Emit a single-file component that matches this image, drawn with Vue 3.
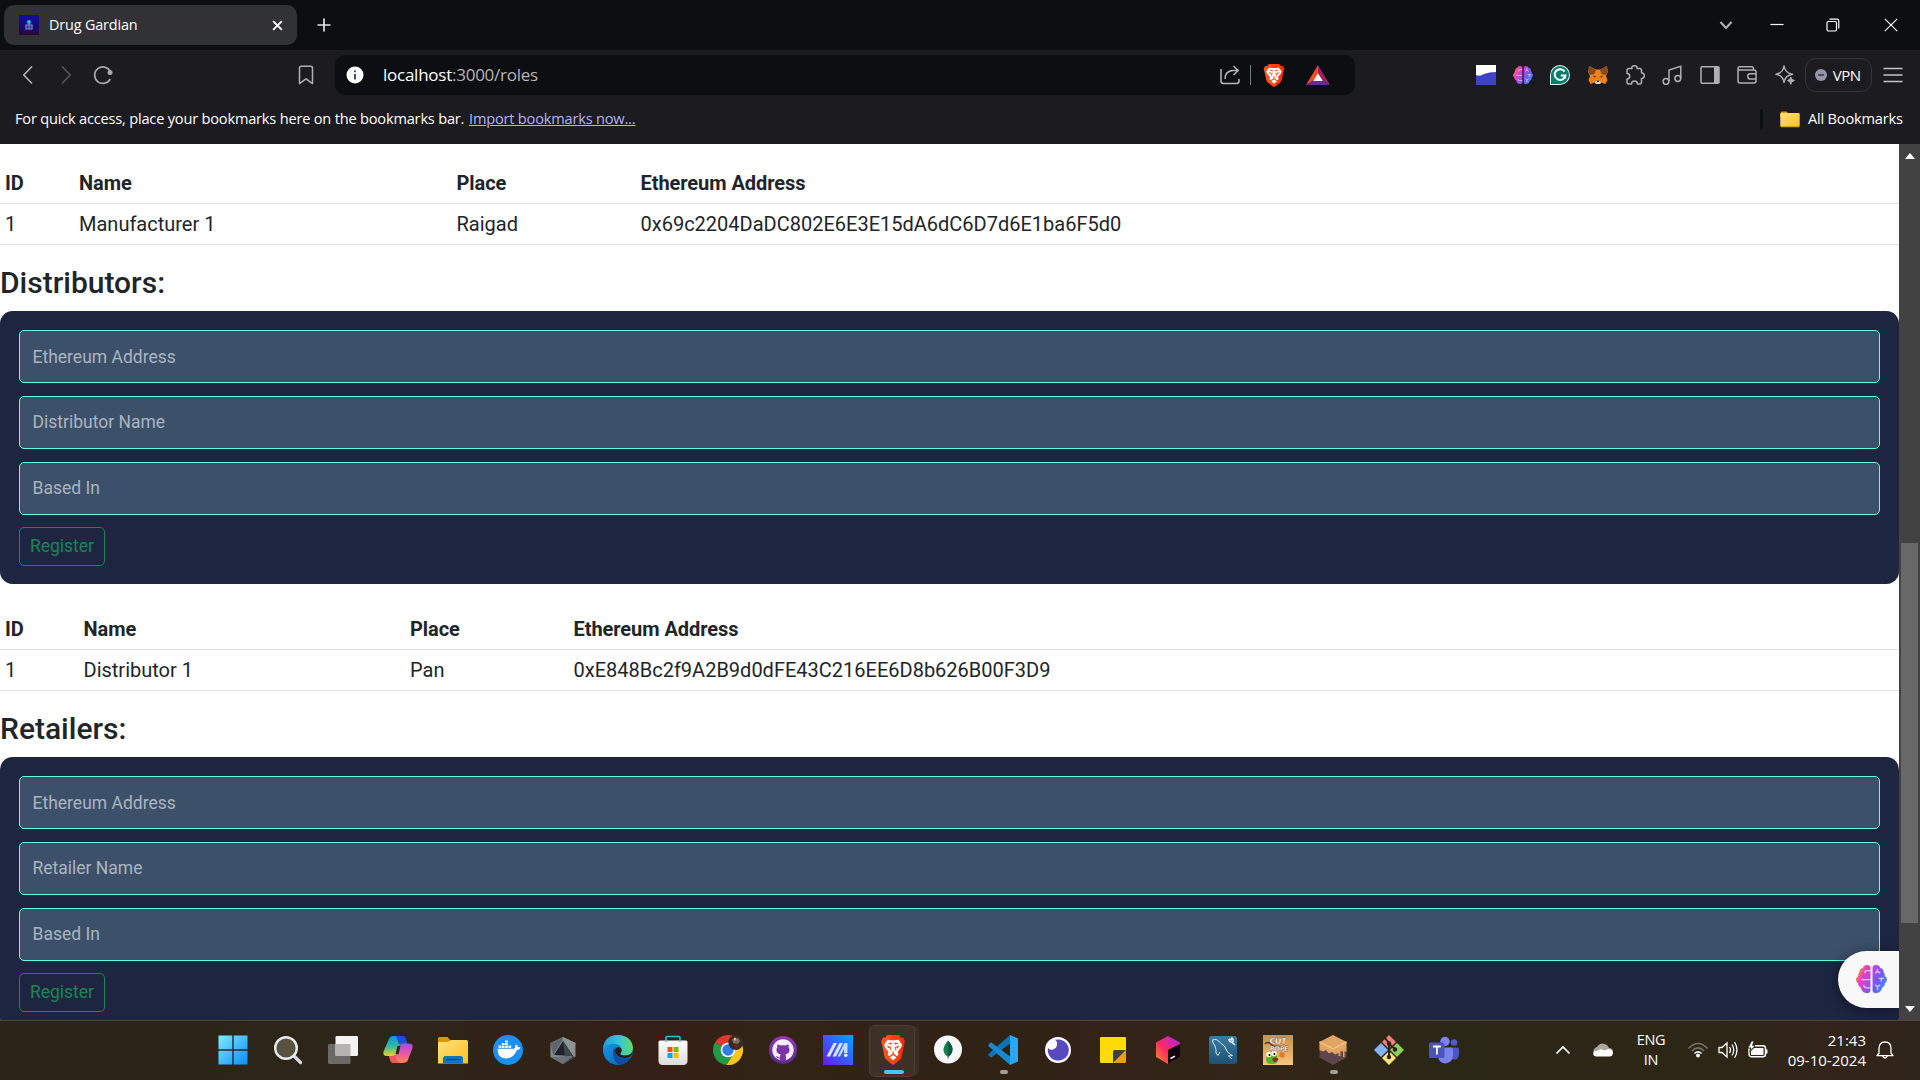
<script setup>
const sections = [
  {
    kind: 'one',
    row: ['1', 'Manufacturer 1', 'Raigad', '0x69c2204DaDC802E6E3E15dA6dC6D7d6E1ba6F5d0'],
    title: 'Distributors:',
    fields: ['Ethereum Address', 'Distributor Name', 'Based In'],
  },
  {
    kind: 'two',
    row: ['1', 'Distributor 1', 'Pan', '0xE848Bc2f9A2B9d0dFE43C216EE6D8b626B00F3D9'],
    title: 'Retailers:',
    fields: ['Ethereum Address', 'Retailer Name', 'Based In'],
  },
]
const heads = ['ID', 'Name', 'Place', 'Ethereum Address']
</script>

<template>
  <div class="screen">
    <svg class="defs" width="0" height="0">
      <defs>
        <linearGradient id="brainL" x1="0" y1="0" x2="1" y2="1">
          <stop offset="0" stop-color="#ffa81f" /><stop offset=".18" stop-color="#fb8a3c" /><stop offset=".42" stop-color="#ee3cc4" /><stop offset="1" stop-color="#6a5cf5" />
        </linearGradient>
        <linearGradient id="brainR" x1="0" y1="0" x2="1" y2="1">
          <stop offset="0" stop-color="#d33be0" /><stop offset=".5" stop-color="#6a5cf5" /><stop offset="1" stop-color="#2aa9ff" />
        </linearGradient>
        <linearGradient id="win" x1="0" y1="0" x2="1" y2="1"><stop offset="0" stop-color="#7cecff" /><stop offset="1" stop-color="#0d8cf5" /></linearGradient>
        <linearGradient id="brv" x1="0" y1="0" x2="1" y2="0"><stop offset="0" stop-color="#ff5a1f" /><stop offset="1" stop-color="#fb2a05" /></linearGradient>
        <linearGradient id="fold" x1="0" y1="0" x2="1" y2="1"><stop offset="0" stop-color="#ffe27a" /><stop offset="1" stop-color="#fbbf23" /></linearGradient>
        <linearGradient id="copA" x1="0" y1="0" x2="0" y2="1"><stop offset="0" stop-color="#1a8fe8" /><stop offset=".5" stop-color="#2db9a0" /><stop offset="1" stop-color="#f0d02c" /></linearGradient>
        <linearGradient id="copB" x1="0" y1="0" x2="0" y2="1"><stop offset="0" stop-color="#a44ae8" /><stop offset=".5" stop-color="#e457a8" /><stop offset="1" stop-color="#ff8a4a" /></linearGradient>
        <linearGradient id="edgeT" x1="0" y1="0" x2="1" y2="0"><stop offset="0" stop-color="#1c9fe0" /><stop offset=".55" stop-color="#35c6d8" /><stop offset="1" stop-color="#62dd5c" /></linearGradient>
        <linearGradient id="edgeB" x1="0" y1="0" x2="1" y2="1"><stop offset="0" stop-color="#1aa0e8" /><stop offset="1" stop-color="#0b58b0" /></linearGradient>
        <linearGradient id="gh" x1="0" y1="0" x2="0" y2="1"><stop offset="0" stop-color="#9239b8" /><stop offset="1" stop-color="#572a86" /></linearGradient>
        <linearGradient id="mm" x1="0" y1="1" x2="1" y2="0"><stop offset="0" stop-color="#6a17f5" /><stop offset="1" stop-color="#00a5ff" /></linearGradient>
        <linearGradient id="jb" x1="0" y1="1" x2="1" y2="0"><stop offset="0" stop-color="#ff8a2a" /><stop offset=".45" stop-color="#fb2a63" /><stop offset="1" stop-color="#a825f0" /></linearGradient>
        <linearGradient id="sql" x1="0" y1="0" x2="0" y2="1"><stop offset="0" stop-color="#3a7ca4" /><stop offset="1" stop-color="#1d5272" /></linearGradient>
        <linearGradient id="bag" x1="0" y1="0" x2="0" y2="1"><stop offset="0" stop-color="#ffffff" /><stop offset="1" stop-color="#dcdcdc" /></linearGradient>
        <linearGradient id="cut" x1="0" y1="0" x2="0" y2="1"><stop offset="0" stop-color="#cf8d45" /><stop offset="1" stop-color="#f3c77c" /></linearGradient>
        <linearGradient id="fav" x1="0" y1="0" x2="0" y2="1"><stop offset="0" stop-color="#1209a8" /><stop offset=".6" stop-color="#1b0a72" /><stop offset="1" stop-color="#27062f" /></linearGradient>
        <g id="brain">
          <path fill="url(#brainL)" d="M14 3.2Q13.4 1 10.500 1Q7.200 1.200 6.600 3.800Q3 4.600 3.300 8Q1.800 9.400 2.200 11.500Q0 12.800 0 15Q0 17.300 2.100 18.500Q1.700 21.600 4.600 22.700Q5.300 26.600 8.600 27.800Q12.800 29.200 14 26Z" />
          <path fill="url(#brainR)" d="M16 3.200Q16.600 1 19.500 1Q22.800 1.200 23.400 3.800Q27 4.600 26.700 8Q28.200 9.400 27.800 11.500Q30 12.800 30 15Q30 17.300 27.900 18.500Q28.300 21.600 25.400 22.700Q24.700 26.600 21.400 27.800Q17.200 29.200 16 26Z" />
          <path class="brain-lines" d="M14 15H5M14 6.500H11Q8.500 6.600 8.500 9M14 23H10.500Q7.800 22.800 7.300 20.500M18.500 9L20.800 7V4.500M20.800 7L23.500 9M22 14H27M24.500 14V17M18.500 20L20.800 22V25M20.800 22L23.500 20" />
        </g>
        <g id="lion">
          <path fill="url(#brv)" d="M8 0H22L24.500 2.800L27 2.400L29 6.500L28 10L25.500 21Q25 23 23 24.600L17 29Q15 30.600 13 29L7 24.600Q5 23 4.500 21L2 10L1 6.500L3 2.400L5.500 2.800Z" />
          <path fill="#fff" d="M8.500 4.500L12 5.300H18L21.500 4.500L25.600 9.700L24.500 12.500L20.500 17L21.500 19.500L19.500 21.200L15.800 18.800V16.500L19 14.800L18.500 12.600L16.800 11.500L18 9.200L21.800 8.200L17.500 7.500L15 8.500L12.500 7.500L8.200 8.200L12 9.200L13.200 11.500L11.500 12.600L11 14.800L14.200 16.500V18.800L10.500 21.200L8.500 19.500L9.500 17L5.500 12.500L4.400 9.700ZM15 20L19 22.400L15 25.600L11 22.400Z" />
          <path fill="#fff" d="M12.500 8.500H17.500L17 12L18 15L15 17L12 15L13 12Z" />
          <path fill="#f9400f" d="M7.500 10.500L12.500 12L9.500 13.200ZM22.500 10.500L17.500 12L20.500 13.200Z" />
        </g>
      </defs>
    </svg>

    <header class="tabs">
      <div class="tab">
        <svg class="favicon" viewBox="0 0 20 20"><rect width="20" height="20" fill="url(#fav)" /><circle cx="10" cy="7" r="2.100" fill="#22bccb" /><path d="M7 10H13V14H7ZM10 9V14M8.500 12H9M11 12H11.800" fill="none" stroke="#8096d8" stroke-width="1.100" /></svg>
        <span class="tab-title">Drug Gardian</span>
        <svg class="close" viewBox="0 0 10 10"><path d="M1 1L9 9M9 1L1 9" stroke="#fff" stroke-width="1.700" /></svg>
      </div>
      <svg class="plus" viewBox="0 0 14 14"><path d="M7 .500V13.500M.500 7H13.500" stroke="#e6e6e8" stroke-width="1.700" /></svg>
      <div class="window-buttons">
        <svg viewBox="0 0 16 16"><path d="M2.500 5L8 11L13.500 5" fill="none" stroke="#b2b2b5" stroke-width="2" /></svg>
        <svg viewBox="0 0 16 16"><path d="M1.500 7.500H14.500" stroke="#fff" stroke-width="1.200" /></svg>
        <svg viewBox="0 0 16 16"><rect x="2" y="4.500" width="9.500" height="9.500" rx="1.500" fill="none" stroke="#fff" stroke-width="1.200" /><path d="M4.500 2.200H12Q13.800 2.200 13.800 4V11.500" fill="none" stroke="#fff" stroke-width="1.200" /></svg>
        <svg viewBox="0 0 16 16"><path d="M1.800 1.800L14.200 14.200M14.200 1.800L1.800 14.200" stroke="#fff" stroke-width="1.200" /></svg>
      </div>
    </header>

    <nav class="toolbar">
      <svg class="nav-back" viewBox="0 0 20 20"><path d="M13 1.500L4.800 10L13 18.500" fill="none" stroke="#b6b5b9" stroke-width="1.600" /></svg>
      <svg class="nav-next" viewBox="0 0 20 20"><path d="M7 1.500L15.200 10L7 18.500" fill="none" stroke="#57565a" stroke-width="1.600" /></svg>
      <svg class="nav-load" viewBox="0 0 20 20"><path d="M17.400 6.500A8.300 8.300 0 1 0 17.300 14" fill="none" stroke="#a9a8ac" stroke-width="1.700" /><circle cx="17" cy="7.500" r="2.500" fill="#a9a8ac" /></svg>
      <svg class="mark" viewBox="0 0 16 20"><path d="M1.500 3Q1.500 1.300 3.200 1.300H12.800Q14.500 1.300 14.500 3V18.600L8 13.800L1.500 18.600Z" fill="none" stroke="#b0afb3" stroke-width="1.500" stroke-linejoin="round" /></svg>
      <div class="address">
        <svg class="info" viewBox="0 0 18 18"><circle cx="9" cy="9" r="8.500" fill="#fff" /><path d="M9 8V13.500M9 4.500V6.300" stroke="#3b3b3e" stroke-width="1.800" /></svg>
        <span class="url"><b>localhost</b>:3000/roles</span>
        <svg class="share" viewBox="0 0 20 20"><path d="M1 4V16Q1 18.500 3.500 18.500H16.500Q19 18.500 19 16V14M5 14Q5 6 13 5.500H18M13.500 1L18.200 5.500L13.500 10" fill="none" stroke="#b9b9bc" stroke-width="1.500" /></svg>
        <i class="bar"></i>
        <svg class="shield" viewBox="0 0 30 30" preserveAspectRatio="none"><use href="#lion" /></svg>
        <svg class="bat" viewBox="0 0 24 20"><path d="M12 0L0 20L12 13Z" fill="#ff4a24" /><path d="M12 0L24 20L12 13Z" fill="#9e1f63" /><path d="M0 20H24L12 12Z" fill="#662d91" /><path d="M12 8.200L16.700 16H7.300Z" fill="#fff" /></svg>
      </div>
      <div class="extensions">
        <svg viewBox="0 0 20 20"><path d="M0 0H20V20H0Z" fill="#fff" /><path d="M0 10Q4 12 8 9Q13 7 20 7V20H0Z" fill="#3d42c9" /></svg>
        <svg viewBox="0 0 30 29"><use href="#brain" /></svg>
        <svg viewBox="0 0 20 20"><path d="M0 20V10A10 10 0 1 1 10 20Z" fill="#e4f2ed" /><path d="M1 19V10A9 9 0 1 1 10 19Z" fill="#087d6b" /><path d="M14.600 6.600A5.400 5.400 0 1 0 15.400 10.500H10.800M15.300 10.300L14.800 13.500" fill="none" stroke="#fff" stroke-width="2" /></svg>
        <svg viewBox="0 0 20 20"><path d="M1 1L8 4.500H12L19 1L19.800 7L18 11L19.500 15L17.500 19L13 17.500L12 19H8L7 17.500L2.500 19L.500 15L2 11L.200 7Z" fill="#ee8020" /><path d="M1 1L8 5L6.500 9L2 10L.500 7ZM19 1L12 5L13.500 9L18 10L19.500 7Z" fill="#864b20" /><path d="M5 10.500L8.500 12L6 12.500ZM15 10.500L11.500 12L14 12.500Z" fill="#3b2b20" /><path d="M8 15.500H12L13 17.500L12 19H8L7 17.500Z" fill="#ded2c8" /><path d="M8.500 15.500H11.500L11 17H9Z" fill="#2d2925" /></svg>
        <svg viewBox="0 0 20 20"><path d="M2 5.500Q2 3.500 4 3.500H7Q6.200 .800 9.500 .800Q12.600 .800 12 3.500H14.500Q16.500 3.500 16.500 5.500V8Q19.400 8 19.400 10.800Q19.400 13.500 16.500 13.500V17Q16.500 19 14.500 19H12.500Q12.500 16 9.500 16Q6.500 16 6.500 19H4Q2 19 2 17V14Q4.700 14 4.700 11Q4.700 8.500 2 8.500Z" fill="none" stroke="#b0afb3" stroke-width="1.500" stroke-linejoin="round" /></svg>
        <svg viewBox="0 0 20 20"><path d="M7 16V5L18.800 1.200V13.500" fill="none" stroke="#b0afb3" stroke-width="1.500" /><circle cx="4" cy="16.500" r="2.900" fill="none" stroke="#b0afb3" stroke-width="1.500" /><circle cx="15.800" cy="13.500" r="2.900" fill="none" stroke="#b0afb3" stroke-width="1.500" /></svg>
        <svg viewBox="0 0 20 20"><rect x="1" y="1.800" width="18" height="16.500" rx="1" fill="none" stroke="#b0afb3" stroke-width="1.500" /><path d="M14 2H19V18H14Z" fill="#b0afb3" /></svg>
        <svg viewBox="0 0 20 20"><path d="M16.500 5V3.500Q16.500 1.800 14.800 1.800H2.500Q1 1.800 1 3.300V16Q1 18 3 18H17Q19 18 19 16V7Q19 5 17 5H2.500Q1 5 1 3.500M19 8.700H13Q10.800 8.700 10.800 11.300T13 14H19" fill="none" stroke="#b0afb3" stroke-width="1.500" /></svg>
        <svg viewBox="0 0 20 20"><path d="M9 1Q10 8 17.500 9.300Q10 10.500 9 17.500Q8 10.500 1 9.300Q8 8 9 1Z" fill="none" stroke="#b0afb3" stroke-width="1.500" stroke-linejoin="round" /><path d="M15.800 12V19M12.300 15.500H19.300" stroke="#1c1b1f" stroke-width="4" /><path d="M15.800 12Q16.200 15 19.500 15.500Q16.200 16 15.800 19.300Q15.400 16 12.300 15.500Q15.400 15 15.800 12Z" fill="#b0afb3" stroke="#b0afb3" /></svg>
      </div>
      <div class="vpn"><svg viewBox="0 0 12 12"><circle cx="6" cy="6" r="6" fill="#9496a9" /><path d="M3 6H9" stroke="#34343f" stroke-width="1.500" /></svg><span>VPN</span></div>
      <svg class="menu" viewBox="0 0 20 16"><path d="M.500 1.500H19.500M.500 8H19.500M.500 14.500H19.500" stroke="#c5c4c8" stroke-width="1.400" /></svg>
    </nav>

    <div class="bookmarks">
      <span class="hint">For quick access, place your bookmarks here on the bookmarks bar.</span>
      <a class="import">Import bookmarks now...</a>
      <i class="divider"></i>
      <svg class="folder" viewBox="0 0 20 17"><path d="M.500 2Q.500 .500 2 .500H6.500L8.500 2.500V6H.500Z" fill="#dc9c10" /><rect x=".300" y="2" width="19.400" height="14" rx="1.200" fill="url(#fold)" /><path d="M1 15.800H19" stroke="#c98f17" /></svg>
      <span class="all">All Bookmarks</span>
    </div>

    <div class="viewport">
      <main class="page">
        <section v-for="s in sections" :key="s.kind" class="section">
          <table :class="['table', s.kind]">
            <colgroup><col class="c-id" /><col class="c-name" /><col class="c-place" /><col /></colgroup>
            <thead><tr><th v-for="h in heads" :key="h">{{ h }}</th></tr></thead>
            <tbody><tr><td v-for="c in s.row" :key="c">{{ c }}</td></tr></tbody>
          </table>
          <h5>{{ s.title }}</h5>
          <div class="form">
            <div v-for="f in s.fields" :key="f" class="field">{{ f }}</div>
            <button class="register">Register</button>
          </div>
        </section>
        <div class="assistant"><svg viewBox="0 0 30 29"><use href="#brain" /></svg></div>
      </main>
      <aside class="scrollbar">
        <svg viewBox="0 0 10 6"><path d="M5 0L10 6H0Z" fill="#fff" /></svg>
        <div class="thumb"></div>
        <svg viewBox="0 0 10 6"><path d="M0 0H10L5 6Z" fill="#fff" /></svg>
      </aside>
    </div>

    <footer class="taskbar">
      <div class="apps">
        <div class="app"><svg viewBox="0 0 30 30"><path d="M.500 .500H14.300V14.300H.500ZM15.700 .500H29.500V14.300H15.700ZM.500 15.700H14.300V29.500H.500ZM15.700 15.700H29.500V29.500H15.700Z" fill="url(#win)" /></svg></div>
        <div class="app"><svg viewBox="0 0 30 30"><path d="M21 21L27.500 27.500" stroke="#d9dbe0" stroke-width="3.200" stroke-linecap="round" /><circle cx="13" cy="13" r="10.800" fill="#57533f" stroke="#e9eaed" stroke-width="2.400" /></svg></div>
        <div class="app"><svg viewBox="0 0 30 30"><rect y="9" width="22.500" height="20" rx="1.200" fill="#6b6a67" /><rect x="7.500" y="1" width="22.500" height="20" rx="1.200" fill="#f3f3f3" /><path d="M7.500 9H22.500V21H7.500Z" fill="#b5b4b1" /></svg></div>
        <div class="app"><svg viewBox="0 0 30 30"><path d="M5.500 5Q6.800 1 10.500 1H19Q22 1 23 5L24 8.500H20Q17 8.500 16 11.500L13.500 19Q12.600 21 10 21H4Q-.500 21 .500 16.500Z" fill="url(#copA)" /><path d="M13 1H19Q22 1 23 5L24 8.500H20Q17 8.500 16 9Z" fill="#1f4fd0" /><path d="M24.500 26Q23.200 28 19.500 28H11Q8 28 7 24.500L6 21H10Q13 21 14 17.500L16.500 11Q17.400 8.500 20 8.500H26Q30.500 8.500 29.500 13Z" fill="url(#copB)" /><path d="M6 21H12Q14 27 17 28H11Q8 28 7 24.500Z" fill="#f05a55" /><path d="M14.500 11H17.500L15.500 19H12.500Z" fill="#2e2418" /></svg></div>
        <div class="app"><svg viewBox="0 0 30 30"><path d="M0 3.500Q0 2 1.500 2H9.500L13 6V12H0Z" fill="#dd9607" /><path d="M0 7H10L13 5H28.500Q30 5 30 6.500V28.500H0Z" fill="url(#fold)" /><path d="M5 28.500V23.500Q5 21 7.500 21H22.500Q25 21 25 23.500V28.500Z" fill="#0b76c8" /><path d="M8.500 24.500H21.500" stroke="#054a85" stroke-width="1.200" /></svg></div>
        <div class="app"><svg viewBox="0 0 30 30"><circle cx="15" cy="15" r="15" fill="#1d8fee" /><path d="M4.500 13.800H20.800Q22.500 13.500 22.300 10.500L23.500 9.500Q25 11 24.800 12.200Q26.500 11.800 27.500 12.800Q26.500 15 24 15Q20.500 23.500 12.500 23.500Q4.500 23.500 4.500 13.800Z" fill="#fff" /><path d="M5.500 10.500H8.300V13H5.500ZM8.800 10.500H11.600V13H8.800ZM12.100 10.500H14.900V13H12.100ZM15.400 10.500H18.200V13H15.400ZM8.800 8H11.600V10H8.800ZM12.100 8H14.900V10H12.100ZM12.100 5.500H14.900V7.500H12.100Z" fill="#e7f3fe" /></svg></div>
        <div class="app"><svg viewBox="0 0 30 30"><path d="M15 2L27.500 8V22L15 29L2.500 22V8Z" fill="#858c91" /><path d="M15 2L2.500 8L5 20L14 6Z" fill="#5f666b" /><path d="M15 2L27.500 8L25 20L16 6Z" fill="#8d9498" /><path d="M15 6L25 21L6 20Z" fill="#1e2429" /><path d="M15 6L17 22L25 21Z" fill="#3d454b" /><path d="M2.500 22L25 21L15 29Z" fill="#6a7176" /><path d="M27.500 22L25 21L15 29Z" fill="#3a4146" /></svg></div>
        <div class="app"><svg viewBox="0 0 30 30"><circle cx="15" cy="15" r="15" fill="url(#edgeB)" /><path d="M0 14Q1 0 15 0Q29 1 30 13Q29.500 20.500 22 20.500Q17 20.500 17.200 18.500Q19 17.500 18.700 14.500Q17.500 9.500 10.500 8.800Q3.500 8.800 0 14Z" fill="url(#edgeT)" /><path d="M12 15.500Q12.500 12.500 15.500 12Q18.500 12.500 18.700 15Q18.500 17.500 17.200 18.500Q17.500 20.600 22 20.600Q26.500 20.600 29.500 17.500Q28.800 21 26.500 22Q20 24 16 21.500Q12 19.500 12 15.500Z" fill="#2a1b16" /><path d="M10.500 14Q8 24 16 29.700Q24 29.500 27.500 22.200Q23 24.500 17.500 22.500Q12 20 12 15.500L13 12.500Z" fill="#0d4f9e" /></svg></div>
        <div class="app"><svg viewBox="0 0 30 30"><path d="M8 7V2.500Q8 1.500 9 1.500H21Q22 1.500 22 2.500V7" fill="none" stroke="#36b5ef" stroke-width="1.600" /><path d="M.500 7Q.500 5.500 2 5.500H28Q29.500 5.500 29.500 7V25.500Q29.500 30 25 30H5Q.500 30 .500 25.500Z" fill="url(#bag)" /><path d="M8 5.500V7M22 5.500V7" stroke="#36b5ef" stroke-width="1.600" /><path d="M9.500 12H14.500V17H9.500Z" fill="#f25022" /><path d="M15.500 12H20.500V17H15.500Z" fill="#7fba00" /><path d="M9.500 18H14.500V23H9.500Z" fill="#00a4ef" /><path d="M15.500 18H20.500V23H15.500Z" fill="#ffb900" /></svg></div>
        <div class="app"><svg viewBox="0 0 30 30"><path d="M15 15L2 7.500A15 15 0 0 1 28 7.500Z" fill="#df382c" /><path d="M15 15L2 7.500A15 15 0 0 0 13.500 30L21 18Z" fill="#229a45" /><path d="M15 7.500H28A15 15 0 0 1 13.500 30L21 18Z" fill="#fcc31e" /><circle cx="15" cy="15" r="7.300" fill="#fff" /><circle cx="15" cy="15" r="5.700" fill="#2f7de8" /><circle cx="22.800" cy="7.500" r="7.500" fill="#332d28" /><path d="M19 4L22 5L25 2.500L27 6L25 9L20 8Z" fill="#77705f" /><circle cx="22" cy="4" r="1.500" fill="#ddc26e" /><path d="M20 10Q23 8 26 11L23 13Z" fill="#7b2119" /></svg></div>
        <div class="app"><svg viewBox="0 0 30 30"><circle cx="15" cy="15" r="14" fill="url(#gh)" /><circle cx="15" cy="15" r="10.700" fill="#f5edfa" /><path d="M9.500 9.500Q11 9.500 12.500 10.600Q15 10 17.500 10.600Q19 9.500 20.500 9.500Q21 11 20.600 12.200Q21.800 13.500 21.500 15.800Q20.800 19 17.300 19.300Q18 20 18 21.500V26.500H12V23.500Q9.500 24 8.800 22.200Q8.500 21.400 7.700 21Q9.200 20.500 10 22Q10.800 22.800 12 22.300Q12 20 12.700 19.300Q9.200 19 8.500 15.800Q8.200 13.500 9.400 12.200Q9 11 9.500 9.500Z" fill="#7c33a4" /></svg></div>
        <div class="app"><svg viewBox="0 0 30 30"><path d="M0 0H30V30H0Z" fill="url(#mm)" /><path d="M3.500 21.500L10.500 8H14L7 21.500ZM9.500 21.500L16.500 8H20L13 21.500Z" fill="#d6e3ff" /><path d="M21.500 8H24.500V18H21V14L17 21.500H14.500Z" fill="#c3d8ff" /><circle cx="22.800" cy="20.200" r="1.700" fill="#fff" /></svg></div>
        <div class="app active"><svg viewBox="0 0 30 30"><use href="#lion" transform="translate(2.500 0) scale(.84 1)" /></svg></div>
        <div class="app"><svg viewBox="0 0 30 30"><circle cx="15" cy="14.500" r="14" fill="#f7f7f7" /><path d="M15 5.500Q20 11 19.500 15Q19 19 15.500 21.500L15 24.500L14.500 21.500Q10.500 18.500 10.500 15Q10.500 10.500 15 5.500Z" fill="#138050" /><path d="M15 5.500Q20 11 19.500 15Q19 19 15.500 21.500L15 24.500Z" fill="#095a3c" /></svg></div>
        <div class="app running"><svg viewBox="0 0 30 30"><path d="M0 20L3 22.800L22 8.500V0L1 18.500Z" fill="#0b73b9" /><path d="M0 10L3 7.200L22 21.500V30L1 11.500Z" fill="#168bd3" /><path d="M22 0L30 3.500V26.500L22 30Z" fill="#2aa7f0" /></svg></div>
        <div class="app"><svg viewBox="0 0 30 30"><circle cx="15" cy="15" r="13" fill="#fbfbfd" /><path d="M15.500 4.600A10.500 10.500 0 1 1 5 13Q6.500 15.500 10 14.500Q14.500 13 14 8Q14 5.500 12 4.800Z" fill="#5849be" /></svg></div>
        <div class="app"><svg viewBox="0 0 30 30"><path d="M2 3Q2 2 3 2H27Q28 2 28 3V16L16 28H3Q2 28 2 27Z" fill="#ffdb05" /><path d="M15 28H27Q28 28 28 27V15Z" fill="#e9a10c" /><path d="M15 28V16.500Q15 15 16.500 15H28Z" fill="#41403c" /></svg></div>
        <div class="app"><svg viewBox="0 0 30 30"><path d="M15 1L27 7.500V22L15 29L3 22V7.500Z" fill="url(#jb)" /><path d="M27 9V22L15 29V15Z" fill="#12010e" /><path d="M17.500 23.500L22 21.200" stroke="#fff" stroke-width="1.500" /></svg></div>
        <div class="app"><svg viewBox="0 0 30 30"><rect x="1" y="1" width="28" height="28" rx="2.500" fill="url(#sql)" /><path d="M4.500 5Q9 3 12.500 8Q17 10 19 16Q20.500 19 24.500 20.500L20.500 21L24 24M4.500 5Q4.500 8 7 11Q8.500 15 8 18L10 20.500L12 17" fill="none" stroke="#d9e7ef" stroke-width="1" /><path d="M21 4Q21 7 23.500 7L27 10M21 4L23 5L24 3Q26 5 24.500 7.500" fill="none" stroke="#edf3f6" stroke-width="1.400" /></svg></div>
        <div class="app"><svg viewBox="0 0 30 30"><path d="M0 0H30V30H0Z" fill="url(#cut)" /><path d="M2 9Q5 5 10 11L20 12" fill="none" stroke="#55331b" stroke-width="1.500" /><text class="game-a" x="6.500" y="9" textLength="17">CUT</text><text class="game-b" x="7" y="16.300" textLength="18">ROPE</text><circle cx="19" cy="20" r="2.800" fill="#e4782d" /><path d="M4 28Q1.500 21 6 18Q10 15 13 19Q16 23 14 28Q9 30 4 28Z" fill="#58b22a" /><circle cx="6" cy="19.500" r="2.700" fill="#efffd9" /><circle cx="11" cy="18.500" r="2.700" fill="#efffd9" /><circle cx="6.500" cy="20" r="1" /><circle cx="11.300" cy="19" r="1" /><path d="M9 24Q13 21 15.500 24Q14 27 11 27Z" fill="#9c2014" /></svg></div>
        <div class="app running"><svg viewBox="0 0 30 30"><path d="M15 0L28.500 7V22.500L15 30L1.500 22.500V7Z" fill="#5c464b" /><path d="M15 0L28.500 7V17L26.500 16V22H25V16.500L22.500 16V21H20.500V18L17 19.500L14 17L11 18.500L8 15L5 16.500L1.500 15V7Z" fill="#e2a463" /><path d="M1.500 7L15 14L28.500 7" fill="none" stroke="#f0c084" stroke-width="1.500" /></svg></div>
        <div class="app"><svg viewBox="0 0 30 30"><path d="M15 0L22 7L15 14L8 7Z" fill="#ef7e7c" /><path d="M7 8L14 15L7 22L0 15Z" fill="#83b2f8" /><path d="M23 8L30 15L23 22L16 15Z" fill="#8bce5b" /><path d="M15 16L22 23L15 30L8 23Z" fill="#fce27d" /><path d="M11 3L15 8V22M15 9L21 14" fill="none" stroke="#2c211b" stroke-width="2" /><circle cx="15" cy="8.500" r="2.200" fill="#2c211b" /><circle cx="21" cy="14.500" r="2.200" fill="#2c211b" /><circle cx="15" cy="22" r="2.200" fill="#2c211b" /></svg></div>
        <div class="app"><svg viewBox="0 0 30 30"><circle cx="25" cy="7.500" r="3.200" fill="#5459c8" /><path d="M21 12.500H28Q30 12.500 30 14.500V19Q30 24.500 25 24.500Q22 24.500 21 23Z" fill="#4f55c5" /><circle cx="16" cy="6.500" r="4.700" fill="#7c84ec" /><path d="M9 12.500H22Q24 12.500 24 14.500V20.500Q23.500 28 16 28.500Q9.500 28 9 21Z" fill="#7a82eb" /><rect y="7.500" width="15.500" height="15.500" rx="1.600" fill="#4b53bc" /><path d="M4 11.500H11.800M7.900 11.500V19.500" stroke="#fff" stroke-width="1.800" /></svg></div>
      </div>
      <div class="tray">
        <svg class="up" viewBox="0 0 16 10"><path d="M1.500 8.500L8 2L14.500 8.500" fill="none" stroke="#fff" stroke-width="1.700" /></svg>
        <svg class="cloud" viewBox="0 0 20 14"><path d="M1 10Q-1 6 4 4Q7 -1 12 1Q15 2 16 5Q19 5 20 8L10 12Z" fill="#a9a6a0" /><path d="M3 13.500Q0 13 .200 10Q.500 7.500 4 8Q7 5 11 7.500L15.500 6Q20 6.500 20 10Q19.500 13.500 16.500 13.500Z" fill="#fff" /></svg>
        <div class="lang"><span>ENG</span><span>IN</span></div>
        <svg class="wifi" viewBox="0 0 20 16"><g fill="none" stroke-width="1.500"><path d="M.500 6.500Q10 -3.500 19.500 6.500M3.800 9Q10 2.800 16.200 9" stroke="#77736a" /><path d="M6.500 11.500Q10 8.300 13.500 11.500" stroke="#fff" /></g><circle cx="10" cy="13.500" r="1.900" fill="#fff" /></svg>
        <svg class="sound" viewBox="0 0 20 18"><path d="M1 6.500H4L9 2V16L4 11.500H1ZM11.500 6Q13.500 9 11.500 12M14 3.500Q17.500 9 14 14.500M16.500 1Q21.500 9 16.500 17" fill="none" stroke="#fff" stroke-width="1.300" /></svg>
        <svg class="battery" viewBox="0 0 20 18"><rect x="1" y="4.800" width="16.500" height="11" rx="2.500" fill="none" stroke="#fff" stroke-width="1.400" /><path d="M3 14V10L6 7H15.500V14ZM18 8.500H19.500V12.500H18Z" fill="#fff" /><path d="M3.500 0L0 7H3L2 11L7 4.500H4.500L6 0Z" fill="#fff" stroke="#2c2618" stroke-width=".8" /></svg>
        <div class="clock"><span class="time">21:43</span><span class="date">09-10-2024</span></div>
        <svg class="bell" viewBox="0 0 18 18"><path d="M3 12V7.500Q3 1 9 1T15 7.500V12L17 14.700H1ZM6.500 15Q9 19 11.500 15" fill="none" stroke="#fff" stroke-width="1.300" stroke-linejoin="round" /></svg>
      </div>
    </footer>
  </div>
</template>

<style>
body { margin: 0; background: #0d0e12; overflow: hidden; }
</style>

<style scoped>
* { box-sizing: border-box; }
svg { display: block; flex: none; }
.defs { position: absolute; }
.screen { width: 1920px; height: 1080px; display: flex; flex-direction: column; font-family: "Open Sans", "Noto Sans", sans-serif; color: #fff; overflow: hidden; }
span, a { white-space: nowrap; }
.brain-lines { fill: none; stroke: #fff; stroke-opacity: .7; stroke-width: 1.2; }
.extensions .brain-lines { stroke: #1c1b1f; }

.tabs { height: 50px; flex: none; background: #0d0e12; display: flex; align-items: center; padding-left: 4px; }
.tab { width: 293px; height: 40px; border-radius: 10px; background: #323135; display: flex; align-items: center; padding: 0 14px 0 15px; }
.favicon { width: 20px; height: 20px; }
.tab-title { font-size: 14.4px; letter-spacing: -.15px; margin-left: 10px; flex: 1; padding-bottom: 2px; }
.close { width: 11px; height: 11px; }
.plus { width: 14px; height: 14px; margin-left: 20px; }
.window-buttons { margin-left: auto; display: flex; padding-right: 21px; }
.window-buttons svg { width: 16px; height: 16px; }
.window-buttons svg:nth-child(2) { margin-left: 35px; }
.window-buttons svg:nth-child(3) { margin-left: 40px; }
.window-buttons svg:nth-child(4) { margin-left: 42px; }

.toolbar { height: 50px; flex: none; background: #1c1b1f; display: flex; align-items: center; padding-left: 19px; }
.nav-back, .nav-next, .nav-load { width: 20px; height: 20px; }
.nav-next { margin-left: 16px; }
.nav-load { margin-left: 18px; }
.mark { width: 16px; height: 20px; margin-left: 185px; }
.address { width: 1020px; height: 40px; border-radius: 10px; background: #0d0e12; margin-left: 21px; display: flex; align-items: center; padding-left: 11px; }
.info { width: 18px; height: 18px; }
.url { font-size: 17px; letter-spacing: -.25px; margin-left: 19px; color: #b5b5b8; width: 837px; flex: none; padding-bottom: 2px; }
.url b { font-weight: 400; color: #fff; }
.share { width: 20px; height: 20px; }
.bar { width: 1px; height: 20px; background: #77777a; margin: 0 12px 0 10px; }
.shield { width: 22px; height: 23px; }
.bat { width: 24px; height: 20px; margin-left: 21px; }
.extensions { display: flex; gap: 17.4px; margin-left: 120.5px; }
.extensions svg { width: 20px; height: 20px; }
.vpn { width: 67px; height: 34px; border: 1px solid #353439; border-radius: 11px; margin-left: 10px; display: flex; align-items: center; padding-left: 9px; font-size: 15px; }
.vpn svg { width: 12px; height: 12px; margin-right: 6px; }
.vpn span { letter-spacing: -.4px; padding-bottom: 1px; }
.menu { width: 20px; height: 16px; margin-left: 11px; }

.bookmarks { height: 44px; flex: none; background: #1c1b1f; display: flex; align-items: center; padding: 0 17px 6px 15px; font-size: 14.6px; }
.bookmarks span, .bookmarks a { padding-bottom: 2px; letter-spacing: -.2px; }
.hint { width: 454px; }
.import { color: #b1b3f6; text-decoration: underline; }
.divider { width: 3px; height: 20px; background: #0d0e12; margin-left: auto; border-radius: 1px; }
.folder { width: 20px; height: 17px; margin-left: 17px; }
.all { width: 95px; margin-left: 8px; }

.viewport { height: 876px; flex: none; display: flex; overflow: hidden; }
.page { width: 1899px; height: 876px; background: #fff; position: relative; overflow: hidden; padding-top: 19px; font-family: Roboto, sans-serif; color: #212529; }
.section { height: 446px; }
.table { width: 100%; table-layout: fixed; border-collapse: separate; border-spacing: 0; margin: 0 0 20px; font-size: 20px; line-height: 30px; }
th, td { padding: 5px; text-align: left; border-bottom: 1px solid #dee2e6; height: 41px; }
th { font-weight: 700; letter-spacing: -.06px; }
.c-id { width: 74px; }
.c-name { width: 377.5px; }
.c-place { width: 184px; }
.two .c-id { width: 78.5px; }
.two .c-name { width: 326.5px; }
.two .c-place { width: 163.5px; }
h5 { margin: 0 0 10px; font-size: 30px; line-height: 36px; font-weight: 500; }
.form { height: 273px; background: #1d2541; border-radius: 12.5px; padding: 19px; }
.field { height: 53px; border: 1px solid #64ffda; border-radius: 5px; background: #3d506a; color: #a9b5c1; font-size: 17.5px; line-height: 51px; padding-left: 12.5px; margin-bottom: 13px; }
.field:first-child { line-height: 53px; }
.register { display: block; width: 86px; height: 39px; margin-top: -1px; padding: 0 0 2px; border: 1px solid #198754; border-radius: 5px; background: transparent; color: #198754; font: 17.5px/26px Roboto, sans-serif; }
.assistant { position: absolute; right: 0; top: 807px; width: 61px; height: 57px; border-radius: 29px 0 0 29px; background: #f8f8f9; box-shadow: 0 2px 14px #0007; padding: 13px 0 0 18px; }
.assistant svg { width: 31px; height: 30px; }
.scrollbar { width: 21px; background: #424242; display: flex; flex-direction: column; align-items: center; padding: 9px 0 8px; }
.scrollbar svg { width: 10px; height: 6px; }
.thumb { width: 17px; height: 380px; background: #686868; margin: 384px 0 auto; }

.taskbar { height: 60px; flex: none; border-top: 1px solid #51463a; background: linear-gradient(90deg, #2b2417 0, #2d2618 18%, #302217 29%, #351f16 34%, #312316 39%, #302215 52%, #332217 57%, #322518 66%, #2b2717 75%, #2c2616 89%, #33241a 96%, #2e241b 100%); display: flex; align-items: center; }
.apps { display: flex; padding: 0 0 1px 205px; }
.app { width: 55.06px; height: 50px; flex: none; display: flex; align-items: center; justify-content: center; position: relative; }
.app svg { width: 30px; height: 30px; position: relative; }
.active::before { content: ""; position: absolute; left: 3px; top: 0; width: 44px; height: 50px; border: 1px solid #4b4032; border-radius: 6px; background: #3d3125; box-shadow: 5px 0 0 -1px #3a2e23; }
.active::after, .running::after { content: ""; position: absolute; bottom: 1px; height: 4px; border-radius: 2px; }
.active::after { width: 20px; background: #4cc2ff; left: 18px; }
.running::after { width: 8px; background: #a39d96; left: 24px; }
.app svg { overflow: visible; }
.game-a, .game-b { font: 800 9px "Open Sans", sans-serif; fill: #fff; stroke: #54311b; stroke-width: .3px; }
.game-b { font-size: 7px; }
.tray { margin-left: auto; display: flex; align-items: center; padding: 0 26px 1px 0; font-size: 14.5px; line-height: 20px; }
.up { width: 16px; height: 10px; }
.cloud { width: 20px; height: 14px; margin-left: 22px; }
.lang { width: 34px; margin-left: 21px; display: flex; flex-direction: column; align-items: center; }
.wifi { width: 20px; height: 16px; margin-left: 20px; }
.sound { width: 20px; height: 18px; margin-left: 10px; }
.battery { width: 20px; height: 18px; margin-left: 10px; }
.clock { width: 80px; margin-left: 18px; display: flex; flex-direction: column; align-items: flex-end; }
.lang span { letter-spacing: -.3px; }
.clock span { font-size: 15px; letter-spacing: 0; }
.bell { width: 18px; height: 18px; margin-left: 10px; }
</style>
